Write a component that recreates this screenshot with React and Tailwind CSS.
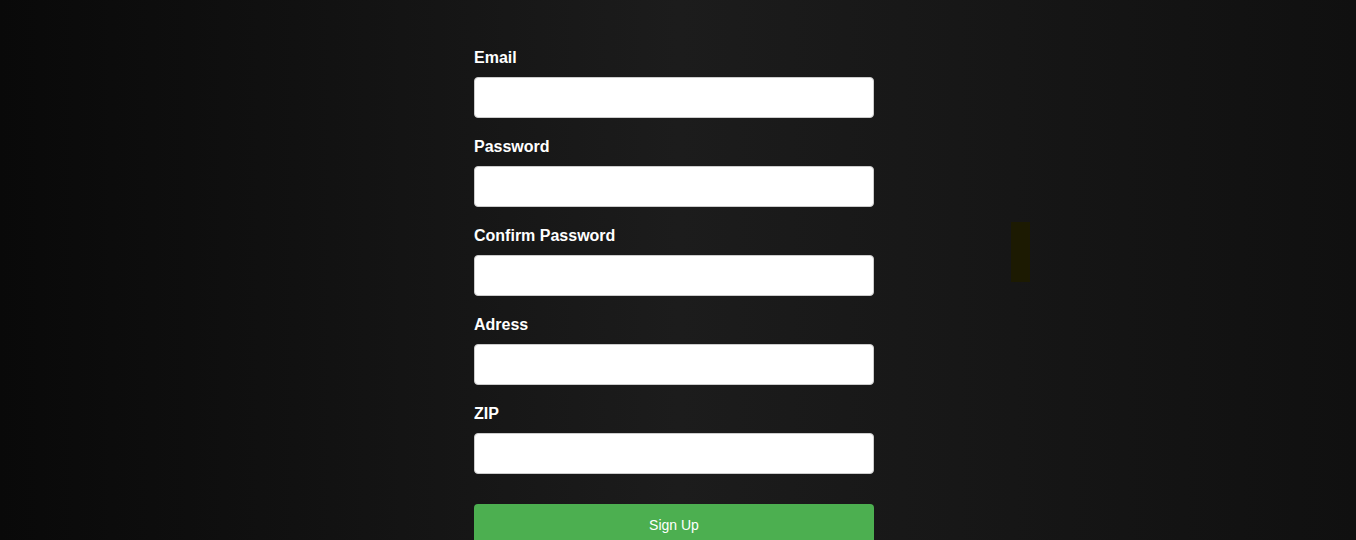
import React from "react";

const fields = ["Email", "Password", "Confirm Password", "Adress", "ZIP"];

export default function App() {
  return (
    <div
      className="relative h-[540px] w-full overflow-hidden bg-gradient-to-r from-[#090909] via-[#1c1c1c] to-[#101010]"
      style={{ fontFamily: '"Liberation Sans", Arial, sans-serif' }}
    >
      <div className="flex justify-center pr-2 pt-[49px]">
        <form className="w-[400px]" onSubmit={(e) => e.preventDefault()}>
          {fields.map((f) => (
            <div key={f} className="mb-[20px]">
              <label className="mb-[10px] block text-[16px] font-bold leading-[18px] text-white">
                {f}
              </label>
              <input
                type={f.includes("Password") ? "password" : "text"}
                className="block h-[41px] w-full rounded-[4px] border border-[#cccccc] bg-white px-3 text-[14px] text-black outline-none"
              />
            </div>
          ))}
          <button
            type="submit"
            className="mt-[30px] block h-[42px] w-full rounded-[4px] bg-[#4caf50] text-[14px] text-white"
          >
            Sign Up
          </button>
        </form>
      </div>
      <div className="absolute left-[1011px] top-[222px] h-[60px] w-[19px] bg-[#1c1a02]" />
    </div>
  );
}
